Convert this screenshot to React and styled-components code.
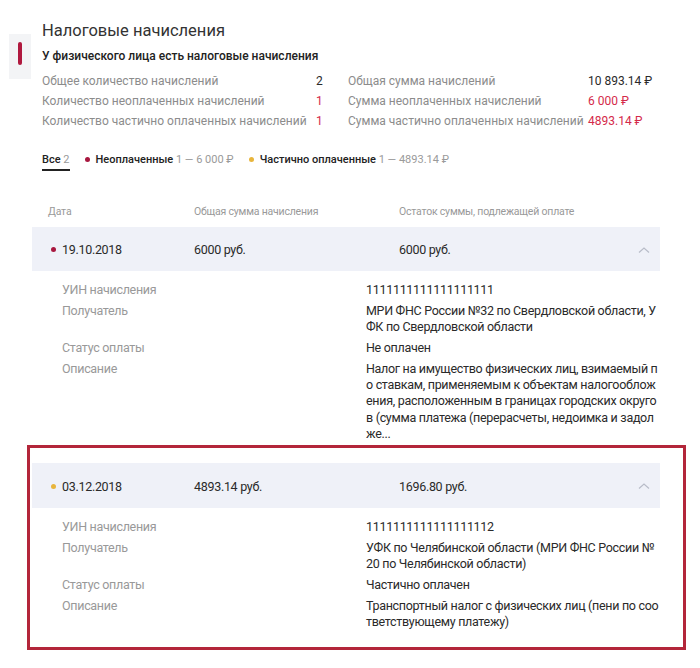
import React from "react";
import styled, { createGlobalStyle } from "styled-components";

const GlobalStyle = createGlobalStyle`
  body {
    margin: 0;
    background: #ffffff;
    font-family: Roboto, "Noto Sans", "Liberation Sans", sans-serif;
    color: #333333;
  }
`;

const Page = styled.div`
  width: 700px;
  padding-top: 20px;
`;

const Header = styled.div`
  display: flex;
  align-items: flex-start;
  padding-left: 9px;
`;

const Marker = styled.div`
  width: 22px;
  height: 45px;
  margin-top: 14px;
  margin-right: 11px;
  background: #f3f4f6;
  display: flex;
  justify-content: center;
  padding-top: 8px;
  box-sizing: border-box;
`;

const MarkerBar = styled.div`
  width: 4px;
  height: 23px;
  border-radius: 2px;
  background: #b0193f;
`;

const HeaderBody = styled.div`
  flex: 1;
`;

const Title = styled.h1`
  margin: 0;
  font-size: 16.5px;
  font-weight: 400;
  line-height: 22px;
  color: #333;
`;

const Subtitle = styled.div`
  margin-top: 6px;
  font-size: 12px;
  font-weight: 500;
  line-height: 16px;
  color: #222;
`;

const Stats = styled.div`
  display: grid;
  grid-template-columns: 274px 32px 240px auto;
  grid-auto-rows: 20px;
  align-items: center;
  margin-top: 7px;
  font-size: 12px;
`;

const StatLabel = styled.div`
  color: #8c8c8c;
  white-space: nowrap;
`;

const StatValue = styled.div`
  color: ${(p) => (p.$accent ? "#d42a4a" : "#2a2a2a")};
  white-space: nowrap;
`;

const Tabs = styled.div`
  display: flex;
  align-items: center;
  gap: 15px;
  margin: 19px 0 0 42px;
  font-size: 11px;
`;

const Tab = styled.div`
  display: flex;
  align-items: center;
  gap: 6px;
  padding: 3px 0 3px;
  border-bottom: 2px solid ${(p) => (p.$active ? "#222" : "transparent")};
  white-space: nowrap;
`;

const Dot = styled.span`
  display: inline-block;
  width: 5px;
  height: 5px;
  border-radius: 50%;
  background: ${(p) => p.$color};
  flex-shrink: 0;
`;

const TabName = styled.span`
  font-weight: 500;
  color: #222;
`;

const TabCount = styled.span`
  color: #9a9a9a;
`;

const Table = styled.div`
  width: 628px;
  margin: 24px 0 0 32px;
`;

const HeadRow = styled.div`
  display: grid;
  grid-template-columns: 146px 205px 1fr;
  padding: 0 16px;
  height: 32px;
  align-items: center;
  font-size: 10.5px;
  color: #999;
  letter-spacing: -0.2px;
`;

const Band = styled.div`
  display: grid;
  grid-template-columns: 132px 205px 1fr 20px;
  align-items: center;
  height: ${(p) => p.$h}px;
  padding: 1px 10px 0 30px;
  box-sizing: border-box;
  background: #eff1f8;
  font-size: 12.5px;
  color: #2a2a2a;
  letter-spacing: -0.3px;
`;

const DateCell = styled.div`
  position: relative;
  display: flex;
  align-items: center;
`;

const RowDot = styled(Dot)`
  position: absolute;
  left: -11px;
`;

const ChevronCell = styled.div`
  display: flex;
  justify-content: flex-end;
`;

const Details = styled.div`
  display: grid;
  grid-template-columns: 304px 1fr;
  row-gap: 4.5px;
  padding: 11px 0 0 30px;
  font-size: 12.5px;
  line-height: 16.3px;
  letter-spacing: -0.3px;
`;

const DetailLabel = styled.div`
  color: #999;
`;

const DetailValue = styled.div`
  color: #2a2a2a;
  white-space: nowrap;
`;

const Highlight = styled.div`
  margin: 3px -26px 0 -5px;
  padding: 15px 23px 17px 2px;
  border: 3px solid #b3263a;
`;

const Chevron = () => (
  <svg width="12" height="8" viewBox="0 0 12 8">
    <polyline points="1,6.5 6,2 11,6.5" fill="none" stroke="#b8bcc8" strokeWidth="1.2" />
  </svg>
);

const charges = [
  {
    date: "19.10.2018",
    total: "6000 руб.",
    rest: "6000 руб.",
    dot: "#a8173f",
    band: 44,
    uin: "1111111111111111111",
    recipient: ["МРИ ФНС России №32 по Свердловской области, У", "ФК по Свердловской области"],
    status: "Не оплачен",
    description: [
      "Налог на имущество физических лиц, взимаемый п",
      "о ставкам, применяемым к объектам налогооблож",
      "ения, расположенным в границах городских округо",
      "в (сумма платежа (перерасчеты, недоимка и задол",
      "же...",
    ],
  },
  {
    date: "03.12.2018",
    total: "4893.14 руб.",
    rest: "1696.80 руб.",
    dot: "#e8b53c",
    band: 45,
    highlighted: true,
    uin: "1111111111111111112",
    recipient: ["УФК по Челябинской области (МРИ ФНС России №", "20 по Челябинской области)"],
    status: "Частично оплачен",
    description: ["Транспортный налог с физических лиц (пени по соо", "тветствующему платежу)"],
  },
];

const Lines = ({ lines }) =>
  lines.map((line, i) => <div key={i}>{line}</div>);

const Charge = ({ item }) => (
  <>
    <Band $h={item.band}>
      <DateCell>
        <RowDot $color={item.dot} />
        {item.date}
      </DateCell>
      <div>{item.total}</div>
      <div>{item.rest}</div>
      <ChevronCell>
        <Chevron />
      </ChevronCell>
    </Band>
    <Details>
      <DetailLabel>УИН начисления</DetailLabel>
      <DetailValue>{item.uin}</DetailValue>
      <DetailLabel>Получатель</DetailLabel>
      <DetailValue>
        <Lines lines={item.recipient} />
      </DetailValue>
      <DetailLabel>Статус оплаты</DetailLabel>
      <DetailValue>{item.status}</DetailValue>
      <DetailLabel>Описание</DetailLabel>
      <DetailValue>
        <Lines lines={item.description} />
      </DetailValue>
    </Details>
  </>
);

export default function App() {
  return (
    <Page>
      <GlobalStyle />
      <Header>
        <Marker>
          <MarkerBar />
        </Marker>
        <HeaderBody>
          <Title>Налоговые начисления</Title>
          <Subtitle>У физического лица есть налоговые начисления</Subtitle>
          <Stats>
            <StatLabel>Общее количество начислений</StatLabel>
            <StatValue>2</StatValue>
            <StatLabel>Общая сумма начислений</StatLabel>
            <StatValue>10 893.14 ₽</StatValue>
            <StatLabel>Количество неоплаченных начислений</StatLabel>
            <StatValue $accent>1</StatValue>
            <StatLabel>Сумма неоплаченных начислений</StatLabel>
            <StatValue $accent>6 000 ₽</StatValue>
            <StatLabel>Количество частично оплаченных начислений</StatLabel>
            <StatValue $accent>1</StatValue>
            <StatLabel>Сумма частично оплаченных начислений</StatLabel>
            <StatValue $accent>4893.14 ₽</StatValue>
          </Stats>
        </HeaderBody>
      </Header>

      <Tabs>
        <Tab $active>
          <span>
            <TabName>Все</TabName> <TabCount>2</TabCount>
          </span>
        </Tab>
        <Tab>
          <Dot $color="#a8173f" />
          <span>
            <TabName>Неоплаченные</TabName> <TabCount>1 — 6 000 ₽</TabCount>
          </span>
        </Tab>
        <Tab>
          <Dot $color="#e8b53c" />
          <span>
            <TabName>Частично оплаченные</TabName> <TabCount>1 — 4893.14 ₽</TabCount>
          </span>
        </Tab>
      </Tabs>

      <Table>
        <HeadRow>
          <div>Дата</div>
          <div>Общая сумма начисления</div>
          <div>Остаток суммы, подлежащей оплате</div>
        </HeadRow>
        {charges.map((item, i) =>
          item.highlighted ? (
            <Highlight key={i}>
              <Charge item={item} />
            </Highlight>
          ) : (
            <Charge key={i} item={item} />
          )
        )}
      </Table>
    </Page>
  );
}
